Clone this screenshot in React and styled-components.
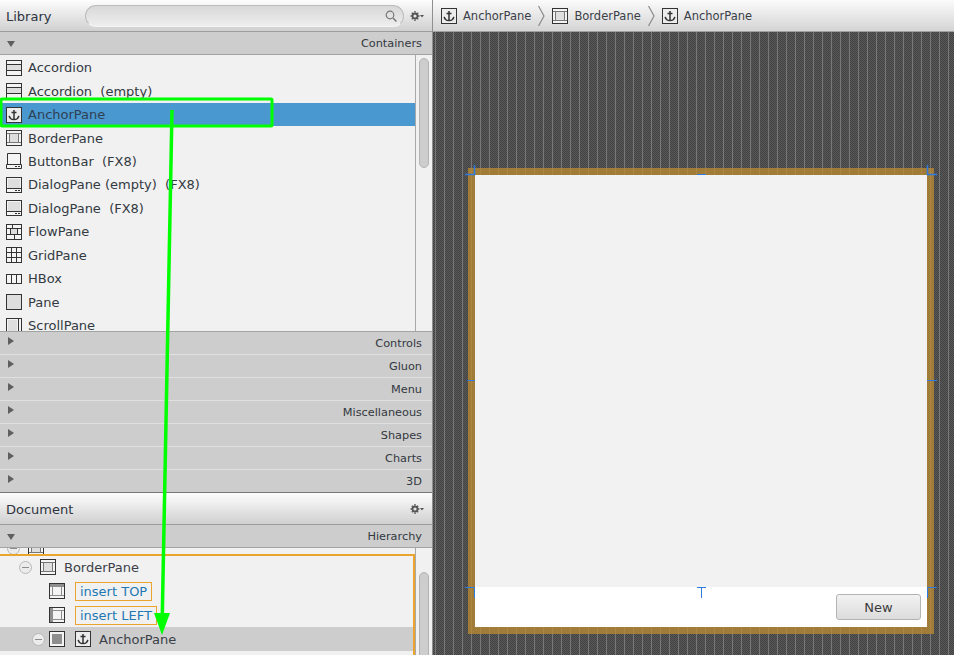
import React from 'react'
import styled, { createGlobalStyle } from 'styled-components'

const GlobalStyle = createGlobalStyle`
  html, body {
    margin: 0;
    padding: 0;
    overflow: hidden;
    background: #f2f2f2;
  }
  * {
    box-sizing: border-box;
  }
`

const Page = styled.div`
  position: relative;
  display: flex;
  width: 954px;
  height: 655px;
  overflow: hidden;
  font-family: 'DejaVu Sans', sans-serif;
  font-size: 13px;
  color: #333;
`

const LeftPanel = styled.div`
  width: 433px;
  height: 655px;
  display: flex;
  flex-direction: column;
  border-right: 1px solid #8f8f8f;
`

const PanelHeader = styled.div`
  height: ${props => props.h}px;
  flex: none;
  display: flex;
  align-items: center;
  padding: 0 8px 0 6px;
  gap: 6px;
  background: linear-gradient(#fdfdfd, #d0d0d0);
  border-top: ${props => (props.topLine ? '1px solid #777' : 'none')};
  border-bottom: 1px solid #9c9c9c;
`

const PanelTitle = styled.span`
  flex: 1;
  padding-top: 2px;
  font-size: 13px;
  color: #2e3440;
`

const SearchBox = styled.div`
  width: 319px;
  height: 22px;
  display: flex;
  align-items: center;
  justify-content: flex-end;
  padding-right: 6px;
  border-radius: 11px;
  border: 1px solid #bdbdbd;
  border-bottom-color: #f4f4f4;
  background: linear-gradient(#d8d8d8, #eeeeee);
`

const SectionBar = styled.div`
  height: ${props => props.h || 23}px;
  flex: none;
  display: flex;
  align-items: center;
  justify-content: space-between;
  padding: 0 10px 0 7px;
  background: #cdcdcd;
  font-size: 11.3px;
  color: #33383f;
  border-top: 1px solid ${props => props.line || '#e3e3e3'};
  border-bottom: ${props => (props.bottomLine ? '1px solid #a3a3a3' : 'none')};
`

const DownArrow = styled.i`
  width: 0;
  height: 0;
  border-left: 4px solid transparent;
  border-right: 4px solid transparent;
  border-top: 6px solid #5f5f5f;
`

const RightArrow = styled.i`
  width: 0;
  height: 0;
  margin: 0 0 4px 1px;
  border-top: 4px solid transparent;
  border-bottom: 4px solid transparent;
  border-left: 6px solid #5f5f5f;
`

const ListArea = styled.div`
  position: relative;
  height: ${props => props.h}px;
  flex: none;
  display: flex;
  overflow: hidden;
  background: #f1f1f1;
`

const ListBody = styled.div`
  width: 416px;
  height: 100%;
  flex: none;
  overflow: hidden;
  padding-top: ${props => props.pad}px;
  border-right: 1px solid #a8a8a8;
`

const ScrollTrack = styled.div`
  flex: 1;
  padding: ${props => props.top}px 3px 0 3px;
`

const ScrollThumb = styled.div`
  height: ${props => props.h}px;
  border-radius: 5px;
  background: #cdcdcd;
  border: 1px solid #b4b4b4;
`

const LibraryRow = styled.div`
  height: 23.45px;
  display: flex;
  align-items: center;
  gap: 6px;
  padding-left: 6px;
  white-space: pre;
  background: ${props => (props.selected ? '#4a98d0' : 'transparent')};
  color: ${props => (props.selected ? '#2f4052' : '#333a42')};
`

const Tree = styled.div`
  position: relative;
  height: 107px;
  width: 100%;
`

const TreeRow = styled.div`
  height: 24px;
  display: flex;
  align-items: center;
  padding-left: ${props => props.indent}px;
  background: ${props => (props.selected ? '#cdcdcd' : 'transparent')};
`

const OrangeFrame = styled.div`
  position: absolute;
  top: 6px;
  left: -2px;
  width: 417px;
  height: 120px;
  border: 2px solid #eba52f;
  pointer-events: none;
`

const ClippedRow = styled.div`
  height: 7px;
  overflow: hidden;
  display: flex;
  padding-left: 7px;
`

const Collapse = styled.span`
  width: 13px;
  height: 13px;
  flex: none;
  margin-top: ${props => props.lift || 0}px;
  border-radius: 50%;
  border: 1px solid #b8b8b8;
  background: #ececec;
  display: flex;
  align-items: center;
  justify-content: center;
  &::after {
    content: '';
    width: 7px;
    height: 1px;
    background: #8c8c8c;
  }
`

const ClippedIcon = styled.span`
  margin: -8px 0 0 8px;
  display: block;
  height: 16px;
`

const TreeLabel = styled.span`
  margin-left: ${props => props.gap}px;
  color: #3b4048;
`

const InsertBox = styled.span`
  margin-left: 10px;
  height: 19px;
  display: flex;
  align-items: center;
  padding: 0 4px;
  border: 1px solid #eba52f;
  color: #1f78b4;
`

const IconGap = styled.span`
  margin-left: ${props => props.gap}px;
  display: flex;
`

const RightPanel = styled.div`
  flex: 1;
  height: 655px;
  display: flex;
  flex-direction: column;
`

const Breadcrumb = styled.div`
  height: 32px;
  flex: none;
  display: flex;
  align-items: center;
  padding-left: 8px;
  background: linear-gradient(#fbfbfb, #d4d4d4);
  border-bottom: 1px solid #a0a0a0;
  color: #3a4048;
  font-size: 11.5px;
`

const Crumb = styled.span`
  display: flex;
  align-items: center;
  gap: 6px;
`

const Chevron = styled.svg`
  margin: 0 7px;
  flex: none;
`

const Canvas = styled.div`
  flex: 1;
  padding: 136px 0 0 35px;
  background-color: #4d4d4d;
  background-image:
    linear-gradient(90deg, transparent 2px, #787878 2px, #787878 3px, transparent 3px),
    repeating-conic-gradient(#434343 0 25%, #585858 0 50%);
  background-size: 9px 100%, 2px 2px;
`

const ContentPane = styled.div`
  position: relative;
  width: 466px;
  height: 466px;
  display: flex;
  flex-direction: column;
  border: 7px solid rgba(190, 140, 50, 0.75);
`

const ContentTop = styled.div`
  flex: 1;
  background: #f2f2f2;
`

const ContentBottom = styled.div`
  height: 40px;
  flex: none;
  display: flex;
  justify-content: flex-end;
  align-items: flex-start;
  padding: 7px 6px 0 0;
  background: #ffffff;
`

const NewButton = styled.button`
  width: 85px;
  height: 26px;
  padding: 0;
  border: 1px solid #b4b4b4;
  border-radius: 3px;
  background: linear-gradient(#f2f2f2, #dcdcdc);
  color: #3c3c3c;
  font-family: inherit;
  font-size: 13px;
`

const Guides = styled.svg`
  position: absolute;
  left: -10px;
  top: -10px;
  overflow: visible;
  pointer-events: none;
`

const Overlay = styled.svg`
  position: absolute;
  left: 0;
  top: 0;
  pointer-events: none;
`

const IconSvg = styled.svg`
  flex: none;
  display: block;
`

const ICON_FILL = '#dedede'
const ICON_LINE = '#333'

const Frame = ({ children }) => (
  <IconSvg width="16" height="16" viewBox="0 0 16 16">
    {children}
  </IconSvg>
)

const icons = {
  accordion: (
    <Frame>
      <rect x="0.5" y="0.5" width="15" height="15" fill="#f4f4f4" stroke={ICON_LINE} />
      <rect x="1" y="5" width="14" height="6" fill={ICON_FILL} />
      <path d="M1 4.5h14M1 10.5h14" stroke={ICON_LINE} />
    </Frame>
  ),
  anchor: (
    <Frame>
      <rect x="0.5" y="0.5" width="15" height="15" fill="#ececec" stroke={ICON_LINE} />
      <path
        d="M8 3v9M5.5 5.5h5M3 9l1.5 2.5c1 .8 2.2 1 3.5 1s2.500-.2 3.500-1L13 9"
        fill="none"
        stroke={ICON_LINE}
        strokeWidth="1.5"
      />
    </Frame>
  ),
  border: (
    <Frame>
      <rect x="0.5" y="0.5" width="15" height="15" fill="#f4f4f4" stroke={ICON_LINE} />
      <rect x="4" y="4" width="8" height="8" fill={ICON_FILL} />
      <path d="M1 3.5h14M1 12.5h14M3.5 3.5v9M12.5 3.5v9" stroke="#777" />
    </Frame>
  ),
  buttonbar: (
    <Frame>
      <rect x="0.5" y="0.5" width="15" height="15" fill="#f4f4f4" stroke="none" />
      <path d="M1.5 11.500V.5h13v11M.5 15.500h15v-4H.5z" fill="none" stroke={ICON_LINE} />
      <path d="M9 13.500h2M12 13.500h2" stroke={ICON_LINE} />
    </Frame>
  ),
  dialog: (
    <Frame>
      <rect x="0.5" y="0.5" width="15" height="15" fill="#f4f4f4" stroke={ICON_LINE} />
      <rect x="2" y="2" width="12" height="9" fill={ICON_FILL} />
      <path d="M1 11.500h14M9 13.500h2M12 13.500h2" stroke={ICON_LINE} />
    </Frame>
  ),
  flow: (
    <Frame>
      <rect x="0.5" y="0.5" width="15" height="15" fill="#f4f4f4" stroke={ICON_LINE} />
      <rect x="5" y="5" width="6" height="5" fill={ICON_FILL} />
      <path d="M1 4.500h14M1 10.500h14M6.500 1v3.500M4.500 5v5.500M11.500 5v5.500M8.500 11v4" stroke={ICON_LINE} />
    </Frame>
  ),
  grid: (
    <Frame>
      <rect x="0.5" y="0.5" width="15" height="15" fill="#f4f4f4" stroke={ICON_LINE} />
      <path d="M5.500 1v14M10.500 1v14M1 5.500h14M1 10.500h14" stroke={ICON_LINE} />
    </Frame>
  ),
  hbox: (
    <Frame>
      <rect x="0.5" y="3.5" width="15" height="9" fill="#f4f4f4" stroke={ICON_LINE} />
      <path d="M5.500 4v8M10.500 4v8" stroke={ICON_LINE} />
    </Frame>
  ),
  pane: (
    <Frame>
      <rect x="0.5" y="0.5" width="15" height="15" fill={ICON_FILL} stroke={ICON_LINE} />
    </Frame>
  ),
  scroll: (
    <Frame>
      <rect x="0.5" y="0.5" width="15" height="15" fill="#f4f4f4" stroke={ICON_LINE} />
      <rect x="2" y="2" width="9" height="12" fill={ICON_FILL} />
      <path d="M12.500 1v14" stroke={ICON_LINE} />
    </Frame>
  ),
  insertTop: (
    <Frame>
      <rect x="0.5" y="0.5" width="15" height="15" fill="#f4f4f4" stroke={ICON_LINE} />
      <rect x="1" y="1" width="14" height="3" fill="#8e8e8e" />
      <path d="M1 3.500h14M1 12.500h14M3.500 4v8.500M12.500 4v8.500" stroke="#8e8e8e" />
    </Frame>
  ),
  insertLeft: (
    <Frame>
      <rect x="0.5" y="0.5" width="15" height="15" fill="#f4f4f4" stroke={ICON_LINE} />
      <rect x="1" y="1" width="3" height="14" fill="#8e8e8e" />
      <path d="M1 3.500h14M1 12.500h14M12.500 4v8.500" stroke="#8e8e8e" />
    </Frame>
  ),
  center: (
    <Frame>
      <rect x="0.5" y="0.5" width="15" height="15" fill="#f4f4f4" stroke={ICON_LINE} />
      <rect x="3" y="3" width="10" height="10" fill="#8e8e8e" />
    </Frame>
  )
}

const LIBRARY = [
  ['accordion', 'Accordion'],
  ['accordion', 'Accordion  (empty)'],
  ['anchor', 'AnchorPane', true],
  ['border', 'BorderPane'],
  ['buttonbar', 'ButtonBar  (FX8)'],
  ['dialog', 'DialogPane (empty)  (FX8)'],
  ['dialog', 'DialogPane  (FX8)'],
  ['flow', 'FlowPane'],
  ['grid', 'GridPane'],
  ['hbox', 'HBox'],
  ['pane', 'Pane'],
  ['scroll', 'ScrollPane']
]

const SECTIONS = ['Controls', 'Gluon', 'Menu', 'Miscellaneous', 'Shapes', 'Charts', '3D']

const Gear = () => (
  <IconSvg width="14" height="12" viewBox="0 0 14 12">
    <circle cx="5" cy="6" r="2.500" fill="none" stroke="#555" strokeWidth="1.800" />
    <path
      d="M5 1v1.500M5 9.500V11M.5 6H2M8 6h1.500M1.800 2.800l1 1M7.200 8.200l1 1M1.800 9.200l1-1M7.200 3.800l1-1"
      stroke="#555"
      strokeWidth="1.400"
    />
    <path d="M10 5h4l-2 2.500z" fill="#555" />
  </IconSvg>
)

const Magnifier = () => (
  <svg width="12" height="12" viewBox="0 0 12 12">
    <circle cx="5" cy="5" r="3.800" fill="none" stroke="#777" strokeWidth="1.200" />
    <path d="M8 8l3.500 3.500" stroke="#777" strokeWidth="1.500" />
  </svg>
)

const CrumbChevron = () => (
  <Chevron width="7" height="22" viewBox="0 0 7 22">
    <path d="M.5 1l5.500 10L.5 21" fill="none" stroke="#8a8a8a" strokeWidth="1.200" />
  </Chevron>
)

// resize guides around the pane, the svg origin is 10px up and left of the content box
const PaneGuides = () => (
  <Guides width="480" height="480">
    <path d="M9.500 0v9.500H0M462.500 0v9.500H472" fill="none" stroke="#2d7be0" strokeWidth="1.500" />
    <path
      d="M232 9.500h9M2 215.500h8M462 215.500h10M0 422.500h9.500V433M462.500 433V422.500H472M232 422.500h9M236.500 423v10"
      fill="none"
      stroke="#2d7be0"
      strokeWidth="1"
    />
  </Guides>
)

export default function App() {
  return (
    <Page>
      <GlobalStyle />
      <LeftPanel>
        <PanelHeader h={32}>
          <PanelTitle>Library</PanelTitle>
          <SearchBox>
            <Magnifier />
          </SearchBox>
          <Gear />
        </PanelHeader>
        <SectionBar h={23} line="#cdcdcd" bottomLine>
          <DownArrow />
          <span>Containers</span>
        </SectionBar>
        <ListArea h={276}>
          <ListBody pad={1}>
            {LIBRARY.map(([icon, label, selected]) => (
              <LibraryRow key={label} selected={selected}>
                {icons[icon]}
                <span>{label}</span>
              </LibraryRow>
            ))}
          </ListBody>
          <ScrollTrack top={3}>
            <ScrollThumb h={110} />
          </ScrollTrack>
        </ListArea>
        {SECTIONS.map(name => (
          <SectionBar key={name} line={name === 'Controls' ? '#a3a3a3' : '#e0e0e0'}>
            <RightArrow />
            <span>{name}</span>
          </SectionBar>
        ))}
        <PanelHeader h={33} topLine>
          <PanelTitle>Document</PanelTitle>
          <Gear />
        </PanelHeader>
        <SectionBar h={23} line="#cdcdcd" bottomLine>
          <DownArrow />
          <span>Hierarchy</span>
        </SectionBar>
        <ListArea h={107}>
          <ListBody pad={0}>
            <Tree>
              <ClippedRow>
                <Collapse lift={-6} />
                <ClippedIcon>{icons.border}</ClippedIcon>
              </ClippedRow>
              <TreeRow indent={19}>
                <Collapse />
                <IconGap gap={8}>{icons.border}</IconGap>
                <TreeLabel gap={8}>BorderPane</TreeLabel>
              </TreeRow>
              <TreeRow indent={49}>
                {icons.insertTop}
                <InsertBox>insert TOP</InsertBox>
              </TreeRow>
              <TreeRow indent={49}>
                {icons.insertLeft}
                <InsertBox>insert LEFT</InsertBox>
              </TreeRow>
              <TreeRow indent={32} selected>
                <Collapse />
                <IconGap gap={4}>{icons.center}</IconGap>
                <IconGap gap={10}>{icons.anchor}</IconGap>
                <TreeLabel gap={8}>AnchorPane</TreeLabel>
              </TreeRow>
              <OrangeFrame />
            </Tree>
          </ListBody>
          <ScrollTrack top={24}>
            <ScrollThumb h={90} />
          </ScrollTrack>
        </ListArea>
      </LeftPanel>
      <RightPanel>
        <Breadcrumb>
          <Crumb>
            {icons.anchor}
            AnchorPane
          </Crumb>
          <CrumbChevron />
          <Crumb>
            {icons.border}
            BorderPane
          </Crumb>
          <CrumbChevron />
          <Crumb>
            {icons.anchor}
            AnchorPane
          </Crumb>
        </Breadcrumb>
        <Canvas>
          <ContentPane>
            <ContentTop />
            <ContentBottom>
              <NewButton>New</NewButton>
            </ContentBottom>
            <PaneGuides />
          </ContentPane>
        </Canvas>
      </RightPanel>
      <Overlay width="954" height="655" viewBox="0 0 954 655">
        <rect x="1" y="99" width="271" height="27" rx="1" fill="none" stroke="#00ff00" strokeWidth="3" />
        <path d="M172 110L162.300 615" stroke="#00ff00" strokeWidth="3.500" fill="none" />
        <path d="M154 613h16l-8 22z" fill="#00ff00" />
      </Overlay>
    </Page>
  )
}
